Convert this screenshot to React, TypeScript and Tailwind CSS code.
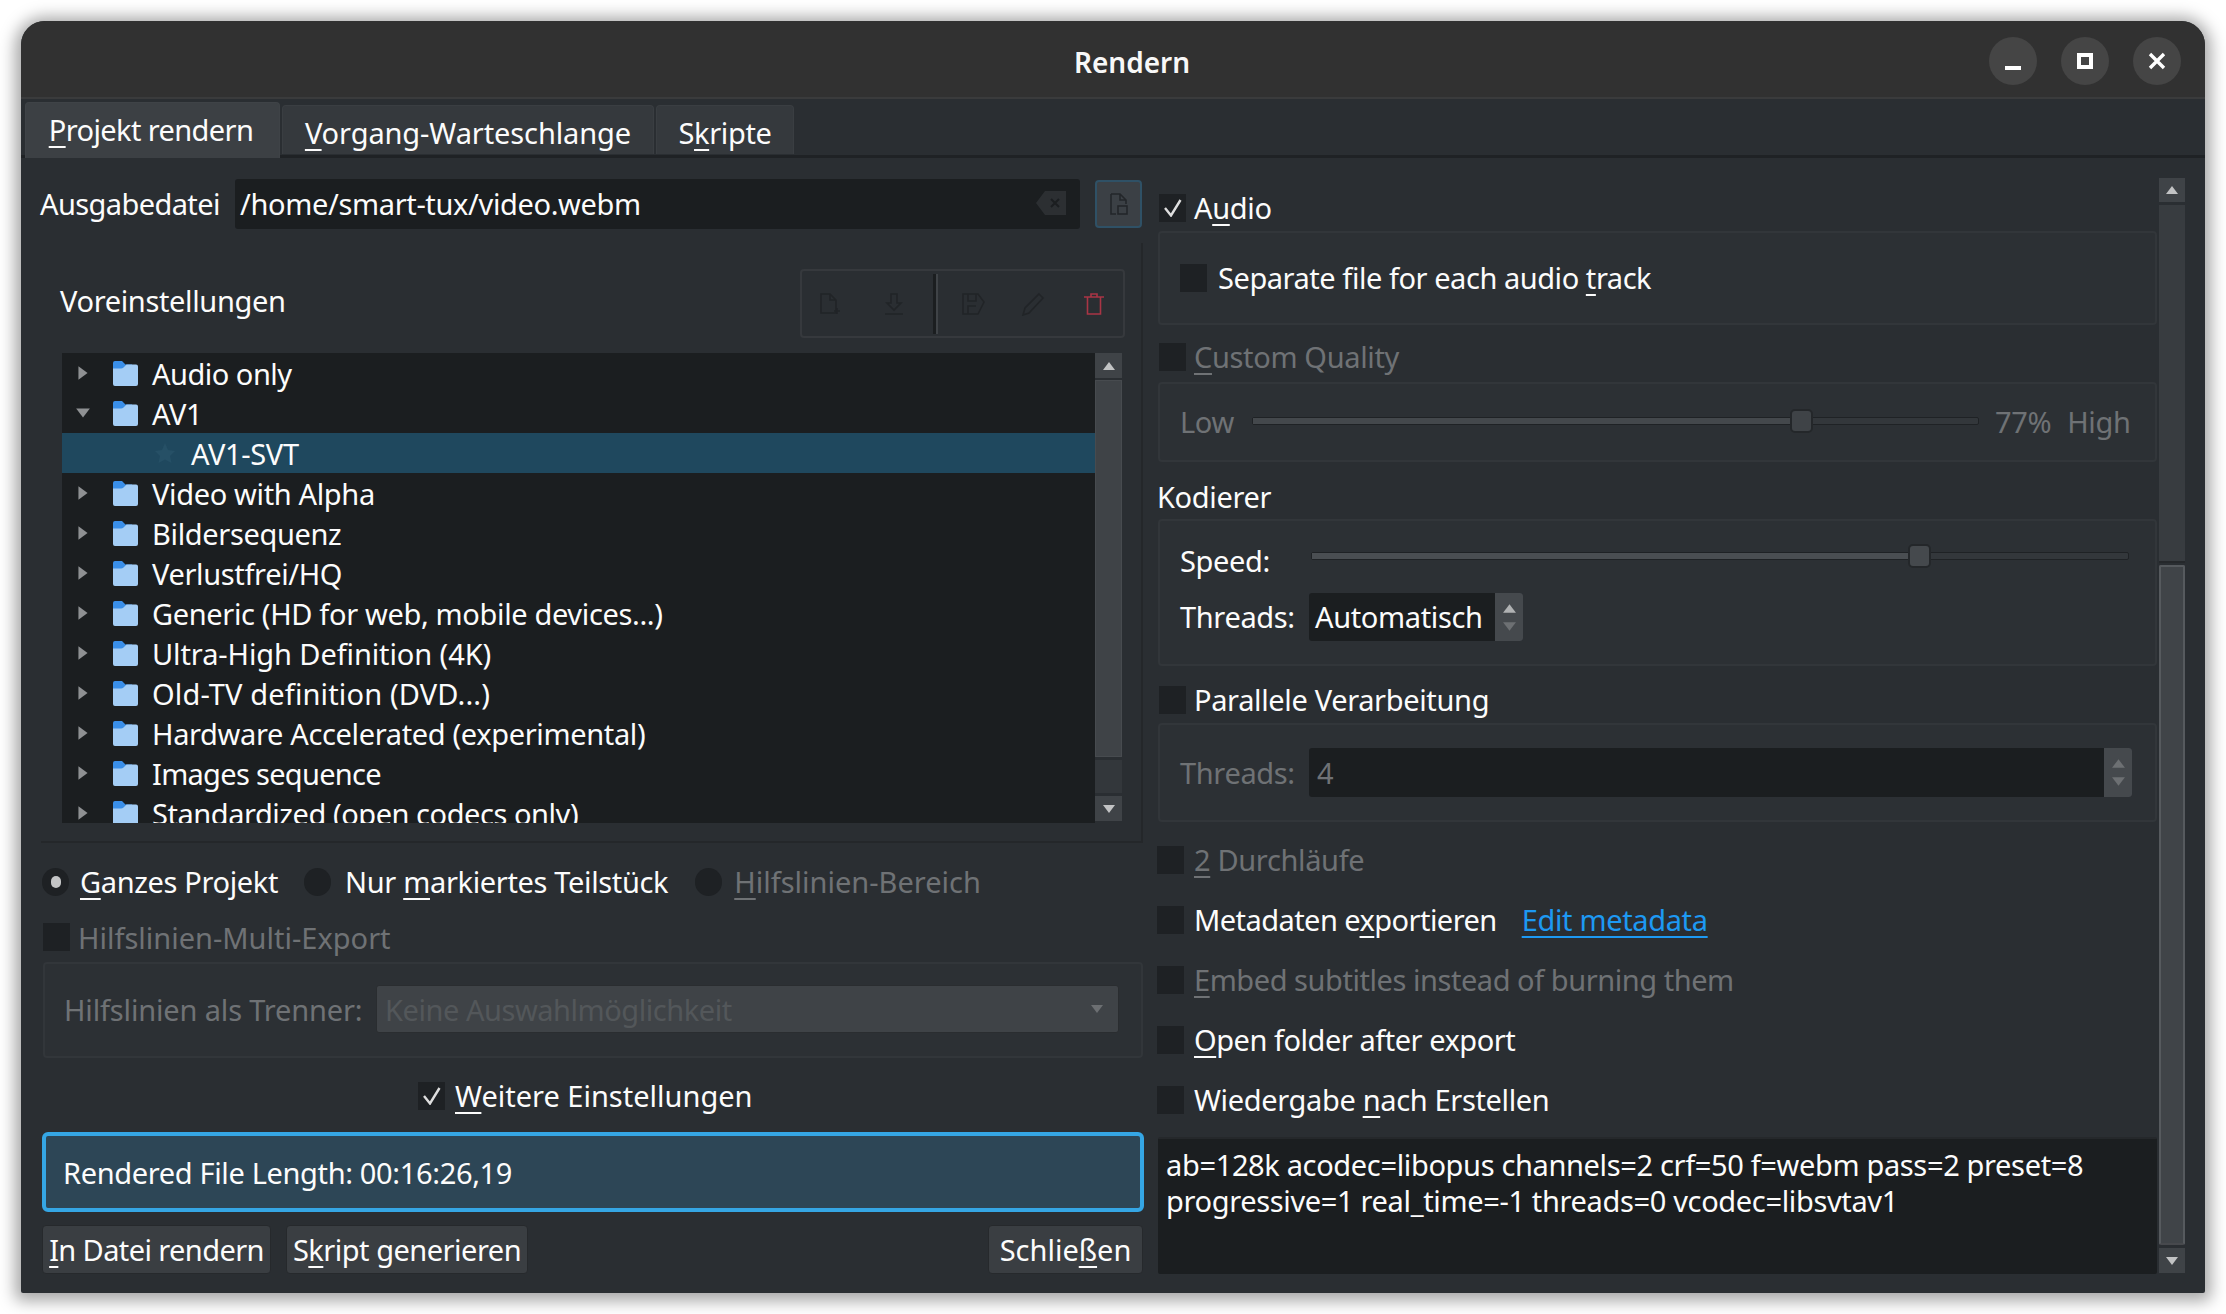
import React from "react";

const FONT = "[font-family:'Noto_Sans',sans-serif]";

function M({ children }: { children: React.ReactNode }) {
  return <span className="underline decoration-2 underline-offset-[5px]">{children}</span>;
}

function CheckBox({ checked = false, className = "" }: { checked?: boolean; className?: string }) {
  return (
    <span className={`flex h-[28px] w-[27px] shrink-0 items-center justify-center bg-[#1e2124] ${className}`}>
      {checked && (
        <svg width="18" height="18" viewBox="0 0 18 18" fill="none" stroke="#dedede" strokeWidth="2.4">
          <path d="M1 9 L7 16.5 L16.5 1" />
        </svg>
      )}
    </span>
  );
}

function Radio({ on = false }: { on?: boolean }) {
  return (
    <span className="flex h-[28px] w-[27px] shrink-0 items-center justify-center rounded-full bg-[#1e2124]">
      {on && <span className="h-[12px] w-[10px] rounded-full bg-[#c4c5c6]" />}
    </span>
  );
}

function Row({ className = "", dim = false, children, checked, gap = "gap-[10px]" }: { className?: string; dim?: boolean; children: React.ReactNode; checked?: boolean; gap?: string }) {
  return (
    <div className={`flex h-[28px] items-center ${gap} ${dim ? "text-[#6f7275]" : "text-[#fcfcfc]"} ${className}`}>
      <CheckBox checked={checked} />
      <span>{children}</span>
    </div>
  );
}

function Tri({ dir, color = "#b9babb", size = 14 }: { dir: "up" | "down" | "right"; color?: string; size?: number }) {
  const p = dir === "up" ? "M1 11 L7 3 L13 11 Z" : dir === "down" ? "M1 3 L7 11 L13 3 Z" : "M3 1 L11 7 L3 13 Z";
  return (
    <svg width={size} height={size} viewBox="0 0 14 14">
      <path d={p} fill={color} />
    </svg>
  );
}

function Folder() {
  return (
    <svg width="27" height="27" viewBox="0 0 27 27" className="shrink-0">
      <path d="M1 3 Q1 1 3 1 H10 L13.5 4.5 H20 V10 H1 Z" fill="#3a8fe9" />
      <path d="M1 8.5 H9 Q10.5 8.5 11.5 7.5 L14.5 4.5 H24 Q26 4.5 26 6.5 V24 Q26 26 24 26 H3 Q1 26 1 24 Z" fill="#a4cdf5" />
    </svg>
  );
}

function TreeRow({ label, open = false, track = "" }: { label: string; open?: boolean; track?: string }) {
  return (
    <div className="flex h-[40px] shrink-0 items-center text-[#fcfcfc]">
      <span className="ml-[13px] flex w-[37px] items-center">
        {open ? <Tri dir="down" color="#8f9193" size={16} /> : <Tri dir="right" color="#8f9193" size={16} />}
      </span>
      <Folder />
      <span className={`ml-[13px] whitespace-nowrap pt-[1px] ${track}`}>{label}</span>
    </div>
  );
}

function SliderBar({ className, pct, handle = "bg-[#45494d]", fill = "bg-[#4a4e52]" }: { className: string; pct: number; handle?: string; fill?: string }) {
  return (
    <div className={`relative h-[8px] rounded-[2px] border border-[#1f2225] bg-[#33373b] ${className}`}>
      <span className={`absolute inset-y-0 left-0 ${fill}`} style={{ width: `${pct}%` }} />
      <span
        className={`absolute top-[-9px] h-[24px] w-[23px] rounded-[5px] border-2 border-[#24272a] ${handle}`}
        style={{ left: `${pct}%` }}
      />
    </div>
  );
}

function ToolIcon({ children, w = 24 }: { children: React.ReactNode; w?: number }) {
  return (
    <svg width={w} height="24" viewBox="0 0 24 24" fill="none" strokeWidth="1.6">
      {children}
    </svg>
  );
}

const TOOL = "#212427";

function Group({ className = "", children }: { className?: string; children: React.ReactNode }) {
  return <div className={`rounded-[4px] border-2 border-[#32363a] bg-[#2c3034] ${className}`}>{children}</div>;
}

function WinBtn({ children }: { children: React.ReactNode }) {
  return <span className="flex h-[48px] w-[48px] items-center justify-center rounded-full bg-[#454545]">{children}</span>;
}

function Btn({ className = "", children }: { className?: string; children: React.ReactNode }) {
  return (
    <div className={`flex h-[49px] items-center justify-center rounded-[4px] border border-[#26292c] bg-[#3a3e42] text-[#fcfcfc] ${className}`}>
      {children}
    </div>
  );
}

function ScrollBtn({ dir }: { dir: "up" | "down" }) {
  return (
    <div className="flex h-[25px] shrink-0 items-center justify-center bg-[#3f4347]">
      <Tri dir={dir} size={14} color="#c2c3c4" />
    </div>
  );
}

export default function App() {
  return (
    <div className={`h-[1314px] w-[2226px] overflow-hidden bg-white pl-[21px] pt-[21px] text-[29px] leading-[36px] tracking-[-0.35px] ${FONT}`}>
      <div className="flex h-[1272px] w-[2184px] flex-col overflow-hidden rounded-t-[24px] rounded-b-[2px] bg-[#2a2e32] shadow-[0_2px_16px_6px_rgba(0,0,0,0.35)]">
        {/* Title bar */}
        <div className="flex h-[78px] shrink-0 items-center border-b-2 border-[#3a3b3c] bg-[#313131] pl-[254px] pr-[24px] pt-[5px]">
          <span className="flex-1 text-center text-[28px] font-semibold tracking-normal text-[#f8f8f8]">Rendern</span>
          <div className="flex gap-[24px] pb-[1px]">
            <WinBtn>
              <span className="mt-[14px] h-[4px] w-[16px] bg-white" />
            </WinBtn>
            <WinBtn>
              <span className="h-[16px] w-[16px] border-[4px] border-white" />
            </WinBtn>
            <WinBtn>
              <svg width="18" height="18" viewBox="0 0 18 18" stroke="white" strokeWidth="3.4" fill="none">
                <path d="M2 2 L16 16 M16 2 L2 16" />
              </svg>
            </WinBtn>
          </div>
        </div>

        {/* Tabs */}
        <div className="flex h-[59px] shrink-0 items-start gap-[2px] border-b-[3px] border-b-[#1f2225] pl-[4px] pt-[3px] text-[#fcfcfc]">
          <div className="flex h-[56px] w-[255px] items-center justify-center rounded-t-[4px] border border-b-0 border-[#3f4347] bg-[#3c4044] pb-[2px] pr-[3px] tracking-[-0.6px]">
            <span><M>P</M>rojekt rendern</span>
          </div>
          <div className="mt-[3px] flex h-[49px] w-[372px] items-center justify-center rounded-t-[4px] border border-b-0 border-[#3a3e42] bg-[#35393d] pt-[5px] tracking-[-0.1px]">
            <span><M>V</M>organg-Warteschlange</span>
          </div>
          <div className="mt-[3px] flex h-[49px] w-[138px] items-center justify-center rounded-t-[4px] border border-b-0 border-[#3a3e42] bg-[#35393d] pt-[5px]">
            <span>S<M>k</M>ripte</span>
          </div>
        </div>

        {/* Body */}
        <div className="flex min-h-0 flex-1">
          {/* Left */}
          <div className="flex w-[1122px] shrink-0 flex-col pl-[22px] text-[#fcfcfc]">
            <div className="mt-[21px] flex h-[49px] items-center">
              <span className="-ml-[3px] w-[195px] shrink-0 tracking-[-0.6px]">Ausgabedatei</span>
              <div className="relative flex h-[50px] w-[845px] items-center rounded-[3px] bg-[#1b1e20] pl-[5px]">
                <span>/home/smart-tux/video.webm</span>
                <svg width="32" height="26" viewBox="0 0 32 26" className="absolute right-[13px] top-[11px]">
                  <path d="M10 1 H31 V25 H10 L1 13 Z" fill="#2c2f32" />
                  <path d="M16 9 L24 17 M24 9 L16 17" stroke="#1b1e20" strokeWidth="2" />
                </svg>
              </div>
              <div className="ml-[15px] flex h-[48px] w-[47px] items-center justify-center rounded-[4px] border-2 border-[#2f5166] bg-[#3b4045]">
                <svg width="22" height="24" viewBox="0 0 22 24" fill="none" stroke="#23262a" strokeWidth="1.6">
                  <path d="M3 2 H12 L18 8 V12 M12 2 V8 H18 M8 22 H3 V2" />
                  <rect x="10" y="14" width="9" height="8" />
                </svg>
              </div>
            </div>

            {/* Presets */}
            <div className="-ml-[2px] mt-[15px] h-[600px] shrink-0 border-b-2 border-r-2 border-[#24272a] pl-[19px] pr-[19px]">
              <div className="mt-[26px] flex h-[69px] items-center justify-between">
                <span className="pb-[6px]">Voreinstellungen</span>
                <div className="-mr-[3px] flex h-[69px] w-[325px] items-center rounded-[4px] border-2 border-[#36393d]">
                  <span className="ml-[15px] flex w-[65px]">
                    <ToolIcon>
                      <path d="M4 2 H13 L19 8 V21 H4 Z M13 2 V8 H19" stroke={TOOL} />
                      <path d="M17 19 H23 M20 16 V22" stroke={TOOL} />
                    </ToolIcon>
                  </span>
                  <span className="flex w-[51px]">
                    <ToolIcon>
                      <path d="M9 2 H15 V11 H19 L12 18 L5 11 H9 Z M3 22 H21" stroke={TOOL} />
                    </ToolIcon>
                  </span>
                  <span className="flex h-[60px] w-[5px] shrink-0">
                    <span className="w-[3px] bg-[#1b1e20]" />
                    <span className="w-[2px] bg-[#3f4347]" />
                  </span>
                  <span className="ml-[23px] flex w-[60px]">
                    <ToolIcon>
                      <path d="M2 2 H17 L23 10 L17 22 H2 Z M7 2 V9 H15 V2 M7 22 V14 H15" stroke={TOOL} />
                    </ToolIcon>
                  </span>
                  <span className="flex w-[61px]">
                    <ToolIcon>
                      <path d="M18 2 L22 6 L8 21 L2 23 L4 16 Z" stroke={TOOL} />
                    </ToolIcon>
                  </span>
                  <span className="flex">
                    <ToolIcon>
                      <path d="M2 5 H22 M9 5 V2 H15 V5 M5.5 5 V22 H18.5 V5" stroke="#a93545" />
                    </ToolIcon>
                  </span>
                </div>
              </div>
              <div className="ml-[2px] mt-[15px] flex h-[470px] w-[1060px] overflow-hidden">
                <div className="flex w-[1033px] flex-col overflow-hidden bg-[#1b1e20]">
                  <TreeRow label="Audio only" track="tracking-[-0.5px]" />
                  <TreeRow label="AV1" open />
                  <div className="flex h-[40px] shrink-0 items-center bg-[#1f485e] text-[#fcfcfc]">
                    <svg width="24" height="24" viewBox="0 0 24 24" className="ml-[91px]">
                      <path d="M12 2 L15 9 L22 10 L17 15 L18.5 22 L12 18.5 L5.5 22 L7 15 L2 10 L9 9 Z" fill="#265066" />
                    </svg>
                    <span className="ml-[14px] pt-[1px]">AV1-SVT</span>
                  </div>
                  <TreeRow label="Video with Alpha" />
                  <TreeRow label="Bildersequenz" />
                  <TreeRow label="Verlustfrei/HQ" />
                  <TreeRow label="Generic (HD for web, mobile devices...)" />
                  <TreeRow label="Ultra-High Definition (4K)" track="tracking-[-0.1px]" />
                  <TreeRow label="Old-TV definition (DVD...)" track="tracking-[0.15px]" />
                  <TreeRow label="Hardware Accelerated (experimental)" />
                  <TreeRow label="Images sequence" track="tracking-[-0.7px]" />
                  <TreeRow label="Standardized (open codecs only)" track="tracking-[-0.45px]" />
                </div>
                <div className="flex w-[27px] flex-col bg-[#2a2e32]">
                  <ScrollBtn dir="up" />
                  <div className="mt-[2px] h-[377px] shrink-0 border border-[#474b4f] bg-[#3f4347]" />
                  <div className="mt-[3px] h-[33px] shrink-0 bg-[#33373b]" />
                  <div className="mt-[3px]">
                    <ScrollBtn dir="down" />
                  </div>
                </div>
              </div>
            </div>

            {/* Scope radios */}
            <div className="-ml-[1px] mt-[25px] flex h-[28px] items-center">
              <Radio on />
              <span className="ml-[11px]"><M>G</M>anzes Projekt</span>
              <span className="ml-[26px]"><Radio /></span>
              <span className="ml-[14px]">Nur <M>m</M>arkiertes Teilstück</span>
              <span className="ml-[27px]"><Radio /></span>
              <span className="ml-[12px] tracking-normal text-[#6f7275]"><M>H</M>ilfslinien-Bereich</span>
            </div>
            <Row dim className="mt-[27px]"><span className="-ml-[2px] block pt-[2px] tracking-normal">Hilfslinien-Multi-Export</span></Row>
            <Group className="mt-[11px] flex h-[96px] w-[1100px] items-center pb-[2px] pl-[19px] text-[#6f7275]">
              <span className="w-[312px] shrink-0 pt-[2px] tracking-[-0.15px]">Hilfslinien als Trenner:</span>
              <div className="flex h-[48px] w-[743px] items-center justify-between rounded-[3px] border border-[#2a2d30] bg-[#3f4347] pl-[8px] pr-[14px] text-[#53575a]">
                <span className="pt-[2px] tracking-[-0.45px]">Keine Auswahlmöglichkeit</span>
                <Tri dir="down" size={14} color="#6c6f72" />
              </div>
            </Group>
            <div className="mt-[24px] flex h-[28px] items-center gap-[10px] pl-[375px] tracking-normal text-[#fcfcfc]">
              <CheckBox checked />
              <span><M>W</M>eitere Einstellungen</span>
            </div>
            <div className="-ml-[1px] mt-[22px] flex h-[80px] w-[1102px] items-center rounded-[6px] border-[4px] border-[#35a6e4] bg-[#2d4656] pl-[17px] pt-[2px]">
              Rendered File Length: 00:16:26,19
            </div>
            <div className="-ml-[1px] mt-[13px] flex w-[1101px]">
              <Btn className="w-[229px] tracking-[-0.6px]"><span><M>I</M>n Datei rendern</span></Btn>
              <Btn className="ml-[15px] w-[242px] tracking-[-0.5px]"><span>S<M>k</M>ript generieren</span></Btn>
              <Btn className="ml-auto w-[155px] tracking-normal"><span>Schlie<M>ß</M>en</span></Btn>
            </div>
          </div>

          {/* Right */}
          <div className="flex min-w-0 flex-1 pl-[15px]">
            <div className="flex w-[999px] shrink-0 flex-col text-[#fcfcfc]">
              <Row checked gap="gap-[8px]" className="mt-[36px] pl-[1px]">A<M>u</M>dio</Row>
              <Group className="mt-[9px] flex h-[94px] items-center pl-[20px]">
                <div className="flex items-center gap-[11px] tracking-[-0.45px]">
                  <CheckBox />
                  <span>Separate file for each audio <M>t</M>rack</span>
                </div>
              </Group>
              <Row dim gap="gap-[8px]" className="mt-[18px] pl-[1px]"><M>C</M>ustom Quality</Row>
              <Group className="mt-[11px] flex h-[80px] items-center pl-[20px] text-[#6f7275]">
                <span className="w-[72px]">Low</span>
                <SliderBar className="mb-[3px] w-[727px]" pct={74} handle="bg-[#3f4347]" fill="bg-[#44484c]" />
                <span className="ml-[16px]">77%</span>
                <span className="ml-[16px]">High</span>
              </Group>
              <div className="-ml-[1px] mt-[17px] h-[36px] shrink-0">Kodierer</div>
              <Group className="mt-[4px] flex h-[147px] flex-col pl-[20px]">
                <div className="mt-[24px] flex h-[36px] items-center">
                  <span className="w-[131px] pb-[5px]">Speed:</span>
                  <SliderBar className="mb-[15px] w-[818px]" pct={73} />
                </div>
                <div className="mt-[12px] flex h-[48px] items-center">
                  <span className="w-[129px]">Threads:</span>
                  <div className="flex h-[48px] w-[214px] items-stretch overflow-hidden rounded-[3px] bg-[#1b1e20]">
                    <span className="flex w-[186px] items-center pl-[6px]">Automatisch</span>
                    <span className="flex w-[28px] flex-col items-center justify-center gap-[3px] bg-[#45494d]">
                      <Tri dir="up" size={15} color="#b0b2b3" />
                      <Tri dir="down" size={15} color="#6d7073" />
                    </span>
                  </div>
                </div>
              </Group>
              <Row gap="gap-[8px]" className="mt-[20px] pl-[1px]">Parallele Verarbeitung</Row>
              <Group className="mt-[9px] flex h-[99px] items-center pl-[20px] text-[#6f7275]">
                <span className="w-[129px]">Threads:</span>
                <div className="flex h-[49px] w-[823px] items-stretch overflow-hidden rounded-[3px] bg-[#1b1e20]">
                  <span className="flex flex-1 items-center pl-[8px]">4</span>
                  <span className="flex w-[28px] flex-col items-center justify-center gap-[3px] bg-[#45494d]">
                    <Tri dir="up" size={15} color="#6d7073" />
                    <Tri dir="down" size={15} color="#6d7073" />
                  </span>
                </div>
              </Group>
              <Row dim className="-ml-[1px] mt-[24px]"><M>2</M> Durchläufe</Row>
              <div className="-ml-[1px] mt-[32px] flex h-[28px] items-center">
                <CheckBox />
                <span className="ml-[10px] tracking-[-0.55px]">Metadaten e<M>x</M>portieren</span>
                <span className="ml-[25px] text-[#1d99f3] underline decoration-2 underline-offset-[5px]">Edit metadata</span>
              </div>
              <Row dim className="-ml-[1px] mt-[32px] tracking-[-0.45px]"><M>E</M>mbed subtitles instead of burning them</Row>
              <Row className="-ml-[1px] mt-[32px] tracking-[-0.47px]"><M>O</M>pen folder after export</Row>
              <Row className="-ml-[1px] mt-[32px]">Wiedergabe <M>n</M>ach Erstellen</Row>
              <div className="mt-[23px] h-[137px] w-[999px] rounded-[2px] border-t-2 border-[#25282b] bg-[#1b1e20] pl-[8px] pt-[8px]">
                <div>ab=128k acodec=libopus channels=2 crf=50 f=webm pass=2 preset=8</div>
                <div>progressive=1 real_time=-1 threads=0 vcodec=libsvtav1</div>
              </div>
            </div>
            <div className="ml-[2px] mt-[20px] flex h-[1095px] w-[26px] flex-col">
              <div className="flex h-[24px] shrink-0 items-center justify-center bg-[#3f4347]">
                <Tri dir="up" size={14} color="#c2c3c4" />
              </div>
              <div className="mt-[3px] h-[358px] shrink-0 border-b-2 border-[#25282b] bg-[#383c40]" />
              <div className="mt-[2px] h-[680px] shrink-0 rounded-[2px] border-2 border-[#565a5e] border-b-[#47494d] bg-[#404448]" />
              <div className="mt-[3px]">
                <ScrollBtn dir="down" />
              </div>
            </div>
          </div>
        </div>
      </div>
    </div>
  );
}
